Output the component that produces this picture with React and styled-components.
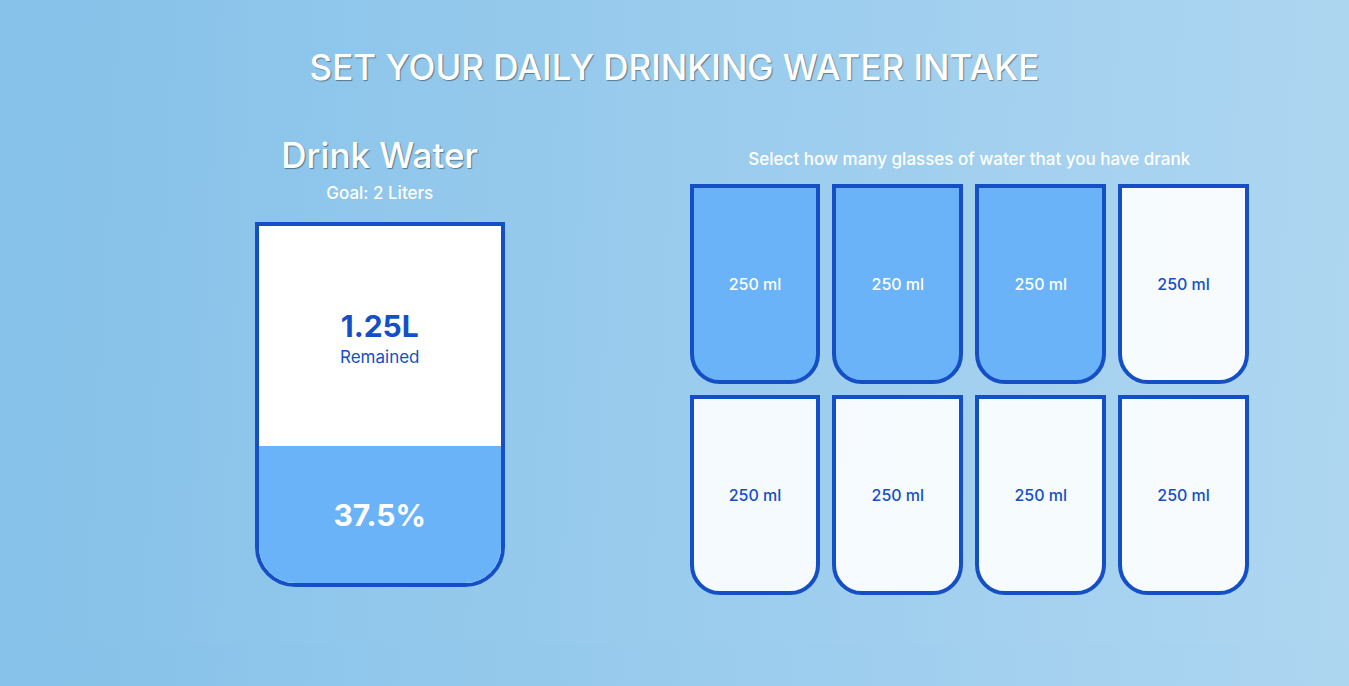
import React, { useState } from "react";
import styled, { createGlobalStyle } from "styled-components";

const INK = "#144fc6";
const WATER = "#6ab3f8";
const GLASS_ML = 250;
const GOAL_ML = 2000;
const CUP_HEIGHT = 365;

const GlobalStyle = createGlobalStyle`
  * { box-sizing: border-box; }
  body {
    margin: 0;
    font-family: Inter, "Noto Sans", sans-serif;
    color: #fff;
    background: linear-gradient(93deg, #85c1e9, #aed6f1);
  }
`;

const Page = styled.main`
  padding: 40px 100px 48px;
`;

const Title = styled.h1`
  margin: 0;
  font-size: 35px;
  line-height: 54px;
  font-weight: 500;
  text-align: center;
  text-transform: uppercase;
  text-shadow: 1px 1px 1px rgba(0, 0, 0, 0.4);
`;

const Columns = styled.div`
  display: grid;
  grid-template-columns: 1fr 1fr;
  gap: 30px;
  margin-top: 34px;
`;

const Summary = styled.section`
  display: flex;
  flex-direction: column;
  align-items: center;
`;

const Heading = styled.h2`
  margin: 0;
  font-size: 35px;
  line-height: 54px;
  font-weight: 500;
  text-shadow: 1px 1px 1px rgba(0, 0, 0, 0.4);
`;

const Goal = styled.p`
  margin: 0 0 18px;
  font-size: 17px;
  line-height: 22px;
  font-weight: 500;
`;

const Cup = styled.div`
  display: flex;
  flex-direction: column;
  width: 250px;
  height: ${CUP_HEIGHT}px;
  overflow: hidden;
  color: ${INK};
  background: #fff;
  border: 4px solid ${INK};
  border-radius: 0 0 40px 40px;
`;

const Remained = styled.div`
  flex: 1;
  display: flex;
  flex-direction: column;
  align-items: center;
  justify-content: center;
  gap: 3px;
  padding-top: 5px;
`;

const Amount = styled.strong`
  font-size: 30px;
  line-height: 34px;
  font-weight: 700;
`;

const Caption = styled.span`
  font-size: 17px;
  line-height: 22px;
`;

const Filled = styled.div`
  display: flex;
  align-items: center;
  justify-content: center;
  color: #fff;
  background: ${WATER};
`;

const Picker = styled.section`
  padding-top: 20px;
`;

const Prompt = styled.p`
  margin: 0 0 14px;
  font-size: 17px;
  line-height: 22px;
  font-weight: 500;
  text-align: center;
`;

const Glasses = styled.div`
  display: grid;
  grid-template-columns: repeat(4, 1fr);
  gap: 11px 12px;
`;

const Glass = styled.button`
  height: 200px;
  padding: 0;
  font: inherit;
  font-size: 16px;
  line-height: 22px;
  font-weight: 500;
  cursor: pointer;
  color: ${(p) => (p.$full ? "#fff" : INK)};
  background: ${(p) => (p.$full ? WATER : "rgba(255, 255, 255, 0.9)")};
  border: 4px solid ${INK};
  border-radius: 0 0 30px 30px;
`;

export default function App() {
  const [count, setCount] = useState(3);
  const total = GOAL_ML / GLASS_ML;
  const share = count / total;

  return (
    <>
      <GlobalStyle />
      <Page>
        <Title>Set your daily drinking water intake</Title>
        <Columns>
          <Summary>
            <Heading>Drink Water</Heading>
            <Goal>Goal: 2 Liters</Goal>
            <Cup>
              {count < total && (
                <Remained>
                  <Amount>{(GOAL_ML - count * GLASS_ML) / 1000}L</Amount>
                  <Caption>Remained</Caption>
                </Remained>
              )}
              {count > 0 && (
                <Filled style={{ height: Math.round(share * CUP_HEIGHT) }}>
                  <Amount>{share * 100}%</Amount>
                </Filled>
              )}
            </Cup>
          </Summary>
          <Picker>
            <Prompt>Select how many glasses of water that you have drank</Prompt>
            <Glasses>
              {Array.from({ length: total }, (_, i) => (
                <Glass
                  key={i}
                  type="button"
                  $full={i < count}
                  aria-pressed={i < count}
                  onClick={() => setCount(i + 1 === count ? i : i + 1)}
                >
                  {GLASS_ML} ml
                </Glass>
              ))}
            </Glasses>
          </Picker>
        </Columns>
      </Page>
    </>
  );
}
